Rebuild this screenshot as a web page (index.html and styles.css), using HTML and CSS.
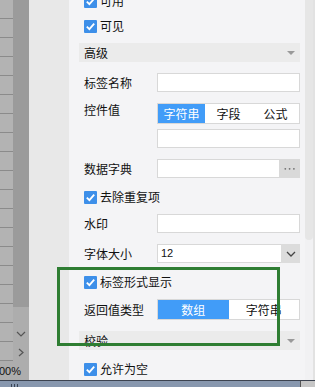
FILE: index.html
```html
<!DOCTYPE html>
<html lang="zh-CN">
<head>
<meta charset="utf-8">
<link rel="stylesheet" href="styles.css">
</head>
<body>
<div class="screen">
  <div class="main">
    <div class="left">
      <div class="left-top">
        <div class="ruler"></div>
        <div class="side-col">
          <div class="side-dark"></div>
          <div class="side-btn"></div>
          <div class="side-btn"><svg width="10" height="6" viewBox="0 0 10 6"><polyline points="1,1 5,5 9,1" fill="none" stroke="#555" stroke-width="1.2"/></svg></div>
          <div class="side-btn"><svg width="6" height="9" viewBox="0 0 6 9"><polyline points="1,1 5,4.5 1,8" fill="none" stroke="#555" stroke-width="1.2"/></svg></div>
        </div>
      </div>
      <div class="zoom-label"><span>100%</span></div>
    </div>
    <div class="gutter"></div>
    <div class="panel">
      <div class="rows">
        <div class="cb-row first"><span class="cb"><svg width="13" height="13" viewBox="0 0 13 13"><rect width="13" height="13" rx="1" fill="#3d8fe9"/><polyline points="2.8,6.6 5.4,9.2 10.2,3.6" fill="none" stroke="#fff" stroke-width="1.8"/></svg></span><span>可用</span></div>
        <div class="cb-row"><span class="cb"><svg width="13" height="13" viewBox="0 0 13 13"><rect width="13" height="13" rx="1" fill="#3d8fe9"/><polyline points="2.8,6.6 5.4,9.2 10.2,3.6" fill="none" stroke="#fff" stroke-width="1.8"/></svg></span><span>可见</span></div>
        <div class="section"><span>高级</span><svg width="8" height="4" viewBox="0 0 8 4"><polygon points="0,0 8,0 4,4" fill="#9a9a9a"/></svg></div>
        <div class="field"><span class="label">标签名称</span><div class="input"></div></div>
        <div class="field seg-field"><span class="label top">控件值</span>
          <div class="seg seg3"><span class="on">字符串</span><span>字段</span><span>公式</span></div>
        </div>
        <div class="field sub"><span class="label"></span><div class="input"></div></div>
        <div class="field"><span class="label">数据字典</span>
          <div class="combo"><div class="combo-input"></div><div class="combo-btn"><svg width="21" height="17" viewBox="0 0 21 17"><circle cx="6.3" cy="9.8" r="0.9" fill="#707070"/><circle cx="10.6" cy="9.8" r="0.9" fill="#707070"/><circle cx="14.9" cy="9.8" r="0.9" fill="#707070"/></svg></div></div>
        </div>
        <div class="cb-row"><span class="cb"><svg width="13" height="13" viewBox="0 0 13 13"><rect width="13" height="13" rx="1" fill="#3d8fe9"/><polyline points="2.8,6.6 5.4,9.2 10.2,3.6" fill="none" stroke="#fff" stroke-width="1.8"/></svg></span><span>去除重复项</span></div>
        <div class="field"><span class="label">水印</span><div class="input"></div></div>
        <div class="field"><span class="label">字体大小</span>
          <div class="combo"><div class="combo-input select-val">12</div><div class="select-btn"><svg width="10" height="6" viewBox="0 0 10 6"><polyline points="1,1 5,5 9,1" fill="none" stroke="#444" stroke-width="1.3"/></svg></div></div>
        </div>
        <div class="cb-row"><span class="cb"><svg width="13" height="13" viewBox="0 0 13 13"><rect width="13" height="13" rx="1" fill="#3d8fe9"/><polyline points="2.8,6.6 5.4,9.2 10.2,3.6" fill="none" stroke="#fff" stroke-width="1.8"/></svg></span><span>标签形式显示</span></div>
        <div class="field seg-field"><span class="label">返回值类型</span>
          <div class="seg seg2"><span class="on">数组</span><span>字符串</span></div>
        </div>
        <div class="section"><span>校验</span><svg width="8" height="4" viewBox="0 0 8 4"><polygon points="0,0 8,0 4,4" fill="#9a9a9a"/></svg></div>
        <div class="cb-row"><span class="cb"><svg width="13" height="13" viewBox="0 0 13 13"><rect width="13" height="13" rx="1" fill="#3d8fe9"/><polyline points="2.8,6.6 5.4,9.2 10.2,3.6" fill="none" stroke="#fff" stroke-width="1.8"/></svg></span><span>允许为空</span></div>
      </div>
    </div>
    <div class="scrollbar"><div class="thumb"></div></div>
  </div>
  <div class="statusbar">
    <div class="grip"><i></i><i></i><i></i></div>
    <div class="corner"></div>
  </div>
  <div class="highlight"></div>
</div>
</body>
</html>
```

FILE: styles.css
```css
* { box-sizing: border-box; }
html, body { margin: 0; padding: 0; }
body {
  font-family: "Noto Sans CJK SC", "Noto Sans", sans-serif;
  font-size: 12px;
  color: #111;
  width: 315px;
  height: 387px;
  overflow: hidden;
}
.screen { position: relative; width: 315px; height: 387px; overflow: hidden; }
.main { display: flex; height: 380px; }

.left { width: 29px; display: flex; flex-direction: column; }
.left-top { flex: 1; display: flex; }
.ruler {
  width: 13px;
  background: repeating-linear-gradient(to bottom, #b3b3b3 0 18px, #8b8b8b 18px 19px);
}
.side-col { width: 16px; display: flex; flex-direction: column; background: #adadad; }
.side-dark { height: 307px; background: #9b9b9b; }
.side-btn { height: 18px; display: flex; align-items: center; justify-content: center; }
.zoom-label {
  height: 19px;
  background: #adadad;
  display: flex;
  justify-content: flex-end;
  align-items: center;
  padding-right: 8px;
  overflow: hidden;
  white-space: nowrap;
  font-family: "Liberation Sans", sans-serif;
  font-size: 11px;
  color: #111;
}
.gutter { width: 40px; background: #e8e8e8; }

.panel {
  width: 236px;
  background: #f4f4f6;
  padding: 0 5px 0 10px;
  overflow: hidden;
}
.rows { display: flex; flex-direction: column; gap: 11px; }

.cb-row {
  height: 16px;
  margin-bottom: -2px;
  padding-left: 5px;
  display: flex;
  align-items: center;
  gap: 3px;
  line-height: 16px;
}
.cb-row.first { margin-top: -7px; }
.cb { width: 13px; height: 13px; display: flex; }

.section {
  height: 19px;
  background: #ebebeb;
  padding: 0 5px;
  display: flex;
  align-items: center;
  justify-content: space-between;
}

.field { display: flex; align-items: center; height: 19px; }
.field.seg-field { height: 21px; }
.field.sub { margin-top: -6px; }
.label { width: 78px; padding-left: 5px; flex: none; white-space: nowrap; }
.label.top { align-self: flex-start; line-height: 14px; }

.input {
  width: 143px;
  height: 19px;
  background: #fff;
  border: 1px solid #d8d8d8;
}

.seg {
  width: 143px;
  height: 21px;
  background: #fff;
  border: 1px solid #d8d8d8;
  display: grid;
}
.seg3 { grid-template-columns: 1fr 1fr 1fr; }
.seg2 { grid-template-columns: 1fr 1fr; }
.seg span {
  display: flex;
  align-items: center;
  justify-content: center;
  color: #111;
}
.seg span.on { background: #419cf8; color: #fff; }

.combo { width: 143px; height: 19px; display: flex; }
.combo-input {
  flex: 1;
  background: #fff;
  border: 1px solid #d8d8d8;
  border-right: none;
}
.combo-btn { width: 21px; background: #d9d9d9; display: flex; }
.select-val {
  font-family: "Liberation Sans", sans-serif;
  font-size: 11px;
  line-height: 17px;
  padding-left: 3px;
}
.select-btn {
  width: 19px;
  background: #dcdcdc;
  display: flex;
  align-items: center;
  justify-content: center;
}

.scrollbar {
  width: 10px;
  background: #f1f1f3;
  border-right: 2px solid #e2e2e2;
}
.thumb {
  width: 8px;
  height: 240px;
  background: #e6e6e6;
  border-radius: 0 0 4px 4px;
}

.statusbar {
  height: 7px;
  border-top: 1px solid #3c4350;
  background: #8797ae;
  display: flex;
  justify-content: space-between;
}
.grip { display: flex; gap: 2px; padding-left: 11px; padding-top: 3px; }
.grip i { display: block; width: 1px; height: 3px; background: #3a4556; }
.corner { width: 15px; background: #c6c6c6; border-left: 1px solid #555; }

.highlight {
  position: absolute;
  left: 57px;
  top: 267px;
  width: 223px;
  height: 79px;
  border: 3px solid #2e7d32;
}
```
